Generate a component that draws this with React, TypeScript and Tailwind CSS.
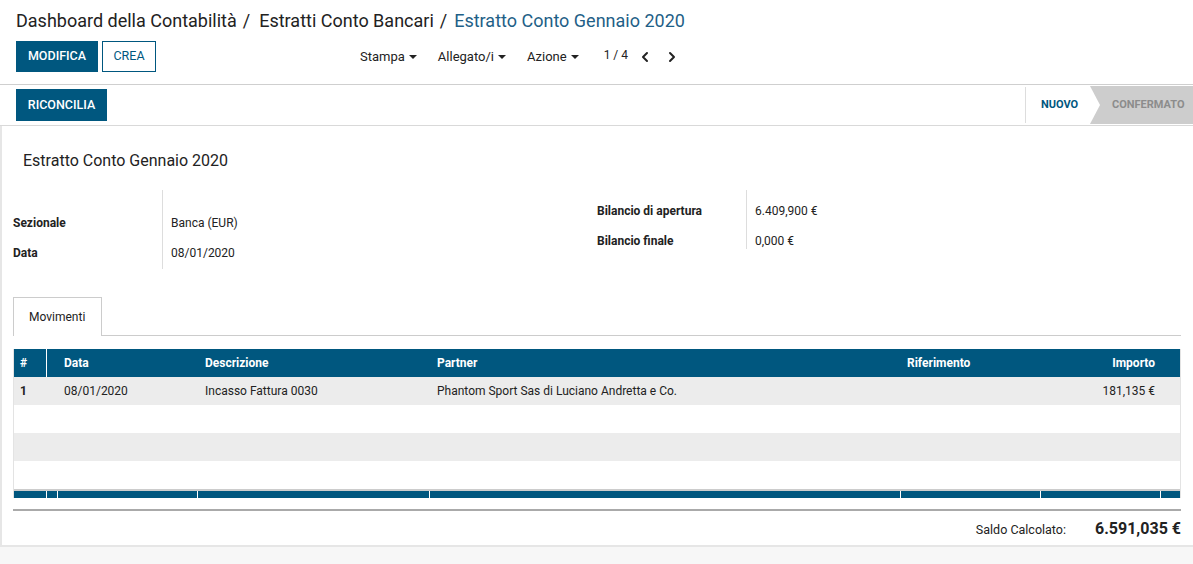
import { ChevronLeft, ChevronRight } from 'lucide-react'

const blue = 'bg-[#00577f]'

function Caret() {
    return <span className="ml-1 inline-block h-0 w-0 border-x-[4px] border-t-[4px] border-x-transparent border-t-[#222] align-middle" />
}

const cols = 'grid grid-cols-[33px_11px_140px_232px_471px_140px_120px_20px]'

function Field({ label, value }: { label: string; value: string }) {
    return (
        <div className="flex h-[30px] items-center">
            <div className="w-[149px] text-[12px] font-bold text-[#222]">{label}</div>
            <div className="pl-[9px] text-[12px] text-[#222]">{value}</div>
        </div>
    )
}

export default function App() {
    const rows = [
        { n: '1', data: '08/01/2020', desc: 'Incasso Fattura 0030', partner: 'Phantom Sport Sas di Luciano Andretta e Co.', rif: '', imp: '181,135 €' },
        null,
        null,
        null,
    ]

    return (
        <div className="h-[564px] w-[1193px] overflow-hidden bg-[#f7f7f7] font-['Roboto',sans-serif] text-[#222]">
            {/* control panel */}
            <div className="h-[85px] border-b border-[#cfcfcf] bg-white px-4">
                <div className="flex h-[41px] items-center text-[18px] leading-none">
                    <span>Dashboard della Contabilità</span>
                    <span className="ml-[6px] mr-[9px]">/</span>
                    <span>Estratti Conto Bancari</span>
                    <span className="ml-[6px] mr-[7px]">/</span>
                    <span className="text-[#1f5f87]">Estratto Conto Gennaio 2020</span>
                </div>
                <div className="flex h-[31px] items-center">
                    <button className={`h-[31px] w-[82px] ${blue} text-[12.5px] font-medium text-white`}>MODIFICA</button>
                    <button className="ml-[4px] h-[31px] w-[54px] border border-[#00577f] bg-white text-[12.5px] text-[#00577f]">CREA</button>
                    <div className="ml-[204px] flex items-center text-[13px]">
                        <span>Stampa<Caret /></span>
                        <span className="ml-[21px]">Allegato/i<Caret /></span>
                        <span className="ml-[21px]">Azione<Caret /></span>
                        <span className="ml-[25px] -mt-[3px] text-[12px]">1 / 4</span>
                        <ChevronLeft className="ml-[9px] h-[16px] w-[16px]" strokeWidth={3} />
                        <ChevronRight className="ml-[11px] h-[16px] w-[16px]" strokeWidth={3} />
                    </div>
                </div>
            </div>

            {/* status bar */}
            <div className="flex h-[41px] items-center border-b border-[#d9d9d9] bg-white pl-4">
                <button className={`h-[32px] w-[91px] ${blue} text-[12.5px] font-medium text-white`}>RICONCILIA</button>
                <div className="ml-auto flex h-full items-stretch">
                    <div className="my-[2px] flex w-[65px] items-center border-l border-[#ddd] pl-[15px] text-[11px] font-bold text-[#00577f]">NUOVO</div>
                    <div className="relative my-[1px] flex w-[103px] items-center bg-[#cdcdcd] pl-[22px] text-[11px] font-bold text-[#8c8c8c]">
                        <div className="absolute left-0 top-0 h-0 w-0 border-y-[19px] border-l-[10px] border-y-transparent border-l-white" />
                        CONFERMATO
                    </div>
                </div>
            </div>

            {/* sheet */}
            <div className="h-[421px] border-b-2 border-l-2 border-[#e6e6e6] bg-white pl-[11px] pr-[12px]">
                <div className="pl-[10px] pt-[25px] text-[16px] leading-[20px]">Estratto Conto Gennaio 2020</div>

                <div className="mt-[19px] flex">
                    <div className="relative w-[584px] pt-[18px]">
                        <div className="absolute left-[149px] top-0 h-[79px] border-l border-[#ddd]" />
                        <Field label="Sezionale" value="Banca (EUR)" />
                        <Field label="Data" value="08/01/2020" />
                    </div>
                    <div className="relative pt-[6px]">
                        <div className="absolute left-[149px] top-0 h-[59px] border-l border-[#ddd]" />
                        <Field label="Bilancio di apertura" value="6.409,900 €" />
                        <Field label="Bilancio finale" value="0,000 €" />
                    </div>
                </div>

                {/* tabs */}
                <div className="mt-[29px] flex h-[39px] items-end">
                    <div className="flex h-[39px] w-[89px] items-center border-x border-t border-[#ccc] pl-[15px] text-[12px]">Movimenti</div>
                    <div className="flex-1 border-b border-[#ccc]" />
                </div>

                {/* table */}
                <div className="mt-[13px] border-x border-[#e3e3e3]">
                    <div className={`${cols} ${blue} h-[28px] items-center text-[12px] font-bold text-white`}>
                        <div className="flex h-full items-center border-r border-white pl-[6px]">#</div>
                        <div />
                        <div className="pl-[6px]">Data</div>
                        <div className="pl-[7px]">Descrizione</div>
                        <div className="pl-[7px]">Partner</div>
                        <div className="pl-[6px]">Riferimento</div>
                        <div className="pr-[6px] text-right">Importo</div>
                        <div />
                    </div>
                    {rows.map((r, i) => (
                        <div key={i} className={`${cols} h-[28px] items-center text-[12px] ${i % 2 === 0 ? 'bg-[#ececec]' : 'bg-white'}`}>
                            <div className="pl-[6px] font-bold">{r?.n}</div>
                            <div />
                            <div className="pl-[6px]">{r?.data}</div>
                            <div className="pl-[7px]">{r?.desc}</div>
                            <div className="pl-[7px]">{r?.partner}</div>
                            <div className="pl-[6px]">{r?.rif}</div>
                            <div className="pr-[6px] text-right">{r?.imp}</div>
                            <div />
                        </div>
                    ))}
                    <div className={`${cols} h-[9px] border-t-2 border-[#cccccc] ${blue}`}>
                        {[0, 1, 2, 3, 4, 5, 6, 7].map((k) => (
                            <div key={k} className={k < 7 ? 'border-r border-white' : ''} />
                        ))}
                    </div>
                </div>

                <div className="mt-[11px] border-t-2 border-[#aaa]" />
                <div className="flex h-[36px] items-center justify-end">
                    <span className="mr-[29px] mt-[3px] text-[12.5px]">Saldo Calcolato:</span>
                    <span className="text-[16px] font-bold">6.591,035 €</span>
                </div>
            </div>
        </div>
    )
}
